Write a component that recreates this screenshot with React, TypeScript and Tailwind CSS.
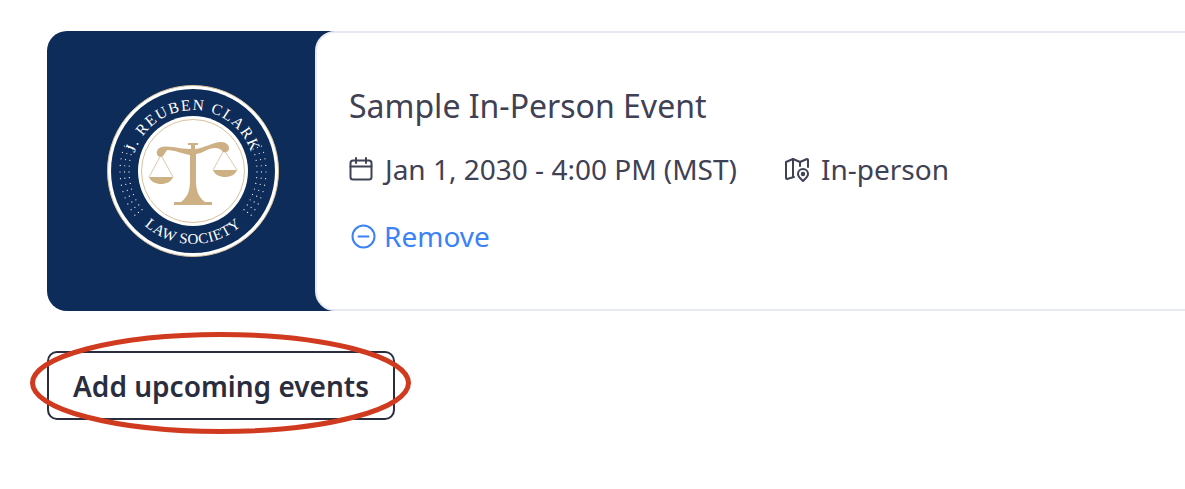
import React from 'react';

const Seal = () => (
  <svg width="172" height="172" viewBox="0 0 172 172">
    <defs>
      <path id="seal-top" d="M 25 86 A 61 61 0 0 1 147 86" />
      <path id="seal-bottom" d="M 13 86 A 73 73 0 0 0 159 86" />
    </defs>
    <circle cx="86" cy="86" r="85.5" fill="#fff" stroke="#d8c39c" strokeWidth="1" />
    <circle cx="86" cy="86" r="82" fill="#0e2c59" />
    <circle cx="86" cy="86" r="55" fill="#fff" />
    <circle cx="86" cy="86" r="51.5" fill="none" stroke="#cdb083" strokeWidth="0.8" />
    <text fill="#fff" fontFamily="'Liberation Serif', serif" fontSize="15.5" letterSpacing="1.5">
      <textPath href="#seal-top" startOffset="50%" textAnchor="middle">J. REUBEN CLARK</textPath>
    </text>
    <text fill="#fff" fontFamily="'Liberation Serif', serif" fontSize="15" letterSpacing="0.6">
      <textPath href="#seal-bottom" startOffset="50%" textAnchor="middle">LAW SOCIETY</textPath>
    </text>
    <g fill="#fff">
      {[0, 1, 2].map((ring) =>
        Array.from({ length: 12 }).map((_, i) => {
          const r = 64 + ring * 4.5;
          const a = ((-20 + i * 5.2) * Math.PI) / 180;
          return (
            <React.Fragment key={`${ring}-${i}`}>
              <circle cx={86 + r * Math.cos(a)} cy={86 + r * Math.sin(a)} r="0.6" />
              <circle cx={86 - r * Math.cos(a)} cy={86 + r * Math.sin(a)} r="0.6" />
            </React.Fragment>
          );
        })
      )}
    </g>
    {/* scales */}
    <g fill="#cdb083">
      <path d="M 50 66 C 52 61 58 61 66 62 C 72 63 78 64 84 64 L 84 60 L 81 60 L 81 58 L 91 58 L 91 60 L 88 60 L 88 64 C 98 63 106 57 114 57 C 119 57 122 60 122 63 C 122 67 118 68 116 67 C 112 61 104 63 98 66 C 94 68 91 69 89 69 L 89 95 C 89 105 91 112 98 117 L 105 117 L 105 120 L 67 120 L 67 117 L 74 117 C 81 112 83 105 83 95 L 83 70 C 76 69 68 65 60 65 C 58 68 56 72 54 72 C 51 72 49 69 50 66 Z" />
      <path d="M 42 92 L 66 92 C 64 97 59 99 54 99 C 49 99 44 97 42 92 Z" />
      <path d="M 106 85 L 130 85 C 128 90 123 92 118 92 C 113 92 108 90 106 85 Z" />
    </g>
    <g stroke="#cdb083" strokeWidth="0.7" fill="none">
      <path d="M 54 70 L 42 92 M 54 70 L 66 92" />
      <path d="M 117 65 L 106 85 M 117 65 L 130 85" />
    </g>
  </svg>
);

const App = () => {
  return (
    <div className="relative h-[489px] w-[1185px] overflow-hidden bg-white pl-[47px] pt-[31px] font-['Noto_Sans',sans-serif]">
      <div className="flex h-[280px] w-[1200px]">
        <div className="flex h-full w-[292px] shrink-0 items-center justify-center rounded-l-[20px] bg-[#0e2c59]">
          <Seal />
        </div>
        <div className="z-10 -ml-[24px] flex h-full flex-1 flex-col rounded-l-[20px] border-2 border-[#e8eaf3] bg-white pl-[32px] pt-[51px]">
          <h2 className="text-[32px] leading-[44px] text-[#3f4154]">Sample In-Person Event</h2>
          <div className="mt-[21px] flex items-center text-[28px] leading-[40px] text-[#3f4154]">
            <svg className="mr-[12px]" width="24" height="24" viewBox="0 0 24 24" fill="none" stroke="#3f4154" strokeWidth="2" strokeLinecap="round" strokeLinejoin="round">
              <rect x="1.5" y="3.5" width="21" height="19" rx="2.5" />
              <path d="M1.5 9.5h21M7 1v5M17 1v5" />
            </svg>
            <span>Jan 1, 2030 - 4:00 PM (MST)</span>
            <svg className="ml-[47px] mr-[11px]" width="26" height="26" viewBox="0 0 26 26" fill="none" stroke="#3f4154" strokeWidth="2" strokeLinecap="round" strokeLinejoin="round">
              <path d="M10 21 L3 23 A1 1 0 0 1 2 22 V6 L9 3 L16 6 L23 3 A1 1 0 0 1 24 4 V11" />
              <path d="M9 3 V21 M16 6 V10" />
              <path d="M19 13 a5 5 0 0 1 5 5 c0 3 -3 5 -5 7 c-2 -2 -5 -4 -5 -7 a5 5 0 0 1 5 -5 Z" />
              <circle cx="19" cy="18" r="1.2" />
            </svg>
            <span>In-person</span>
          </div>
          <button className="mt-[27px] flex items-center self-start text-[28px] leading-[40px] text-[#3b82f6]">
            <svg className="ml-[2px] mr-[8px]" width="25" height="25" viewBox="0 0 25 25" fill="none" stroke="#3b82f6" strokeWidth="2" strokeLinecap="round">
              <circle cx="12.5" cy="12.5" r="11" />
              <path d="M7.5 12.5h10" />
            </svg>
            Remove
          </button>
        </div>
      </div>

      <button className="mt-[40px] flex h-[69px] w-[348px] items-center justify-center rounded-[10px] border-2 border-[#2a2d3e] pt-[1px] text-[28px] font-semibold text-[#2a2d3e]">
        Add upcoming events
      </button>

      {/* annotation ring drawn over the button */}
      <svg className="absolute left-[28px] top-[330px]" width="386" height="106" viewBox="0 0 386 106" fill="none">
        <ellipse cx="192.5" cy="53" rx="188" ry="48.5" stroke="#d03a1f" strokeWidth="5" />
      </svg>
    </div>
  );
};

export default App;
